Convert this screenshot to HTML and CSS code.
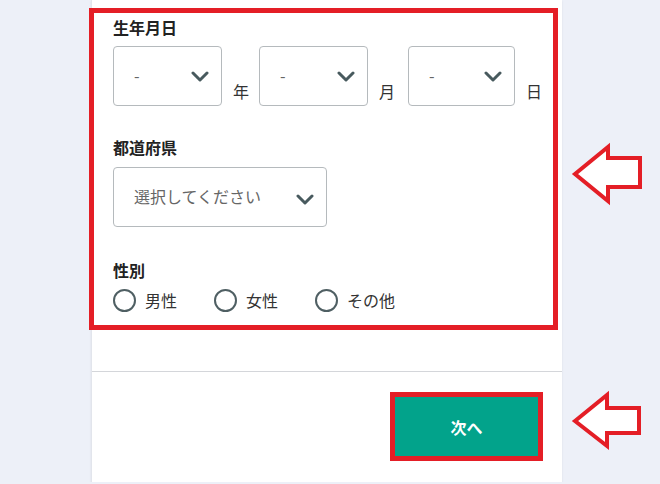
FILE: index.html
```html
<!DOCTYPE html>
<html lang="ja">
<head>
    <meta charset="UTF-8">
    <meta name="viewport" content="width=device-width, initial-scale=1.0">
    <title>会員登録</title>
    <link rel="stylesheet" href="styles.css">
</head>
<body>
    <div class="card">
        <div class="form">
            <div class="label">生年月日</div>
            <div class="date-row">
                <div class="select date">
                    <span class="value">-</span>
                    <svg class="chevron" width="18" height="11" viewBox="0 0 18 11"><polyline points="2,2 9,9 16,2"/></svg>
                </div>
                <span class="unit">年</span>
                <div class="select date">
                    <span class="value">-</span>
                    <svg class="chevron" width="18" height="11" viewBox="0 0 18 11"><polyline points="2,2 9,9 16,2"/></svg>
                </div>
                <span class="unit month">月</span>
                <div class="select date short">
                    <span class="value">-</span>
                    <svg class="chevron" width="18" height="11" viewBox="0 0 18 11"><polyline points="2,2 9,9 16,2"/></svg>
                </div>
                <span class="unit">日</span>
            </div>

            <div class="label second">都道府県</div>
            <div class="select pref">
                <span class="value">選択してください</span>
                <svg class="chevron" width="18" height="11" viewBox="0 0 18 11"><polyline points="2,2 9,9 16,2"/></svg>
            </div>

            <div class="label third">性別</div>
            <div class="radio-row">
                <label class="radio"><span class="circle"></span>男性</label>
                <label class="radio"><span class="circle"></span>女性</label>
                <label class="radio"><span class="circle"></span>その他</label>
            </div>
        </div>

        <div class="footer">
            <button class="next">次へ</button>
        </div>
    </div>

    <!-- annotations -->
    <div class="highlight"></div>
    <svg class="arrow arrow-form" width="80" height="70" viewBox="0 0 80 70">
        <polygon points="7,34 40,7 40,18 72,18 72,47 40,47 40,61"/>
    </svg>
    <svg class="arrow arrow-button" width="80" height="70" viewBox="0 0 80 70">
        <polygon points="7,34 39,8 39,21 71,21 71,46 39,46 39,59"/>
    </svg>
</body>
</html>
```

FILE: styles.css
```css
body {
    margin: 0;
    background-color: #edf0f8;
    font-family: "Noto Sans CJK JP", "Noto Sans", sans-serif;
    color: #333;
}

.card {
    width: 470px;
    height: 482px;
    margin-left: 91px;
    background-color: #fff;
    border-left: 1px solid #e2e5ec;
    box-shadow: 0 1px 2px rgba(0, 0, 0, 0.08);
}

.form {
    padding: 17px 0 0 21px;
    height: 354px;
    border-bottom: 1px solid #d4d6da;
}

.label {
    font-size: 16px;
    font-weight: bold;
    line-height: 20px;
    color: #222;
}

.label.second {
    margin-top: 31px;
}

.label.third {
    margin-top: 33px;
}

.date-row {
    display: flex;
    margin-top: 9px;
}

.select {
    box-sizing: border-box;
    height: 60px;
    border: 1px solid #b5babd;
    border-radius: 4px;
    display: flex;
    align-items: center;
    justify-content: space-between;
    padding: 0 12px 0 20px;
    color: #666;
    font-size: 16px;
}

.select .value {
    line-height: 24px;
    margin-top: -2px;
}

.select.date {
    width: 109px;
}

.select.date.short {
    width: 107px;
}

.select.pref {
    width: 214px;
    margin-top: 10px;
}

.select.pref .chevron {
    margin-top: 4px;
}

.chevron {
    fill: none;
    stroke: #485a5e;
    stroke-width: 3;
    stroke-linecap: round;
    stroke-linejoin: round;
}

.unit {
    align-self: flex-end;
    width: 16px;
    margin: 0 10px 3px 11px;
    font-size: 16px;
    line-height: 24px;
    color: #333;
}

.unit.month {
    margin-right: 13px;
}

.radio-row {
    display: flex;
    gap: 37px;
    margin-top: 9px;
}

.radio {
    display: flex;
    align-items: center;
    gap: 9px;
    font-size: 16px;
    line-height: 23px;
    color: #333;
}

.circle {
    box-sizing: border-box;
    width: 23px;
    height: 23px;
    border: 2px solid #4f5f63;
    border-radius: 50%;
    background-color: #fff;
}

.footer {
    display: flex;
    justify-content: flex-end;
    padding: 25px 24px 0 0;
}

.next {
    width: 143px;
    height: 59px;
    border: none;
    background-color: #02a38b;
    color: #fff;
    font-family: "Noto Sans CJK JP", sans-serif;
    font-size: 16px;
    font-weight: bold;
    outline: 5px solid #e41e26;
}

.highlight {
    position: absolute;
    left: 89px;
    top: 8px;
    width: 459px;
    height: 312px;
    border: 5px solid #e41e26;
}

.arrow {
    position: absolute;
    left: 568px;
}

.arrow polygon {
    fill: #fff;
    stroke: #e41e26;
    stroke-width: 4;
}

.arrow-form {
    top: 140px;
}

.arrow-button {
    top: 387px;
}
```
